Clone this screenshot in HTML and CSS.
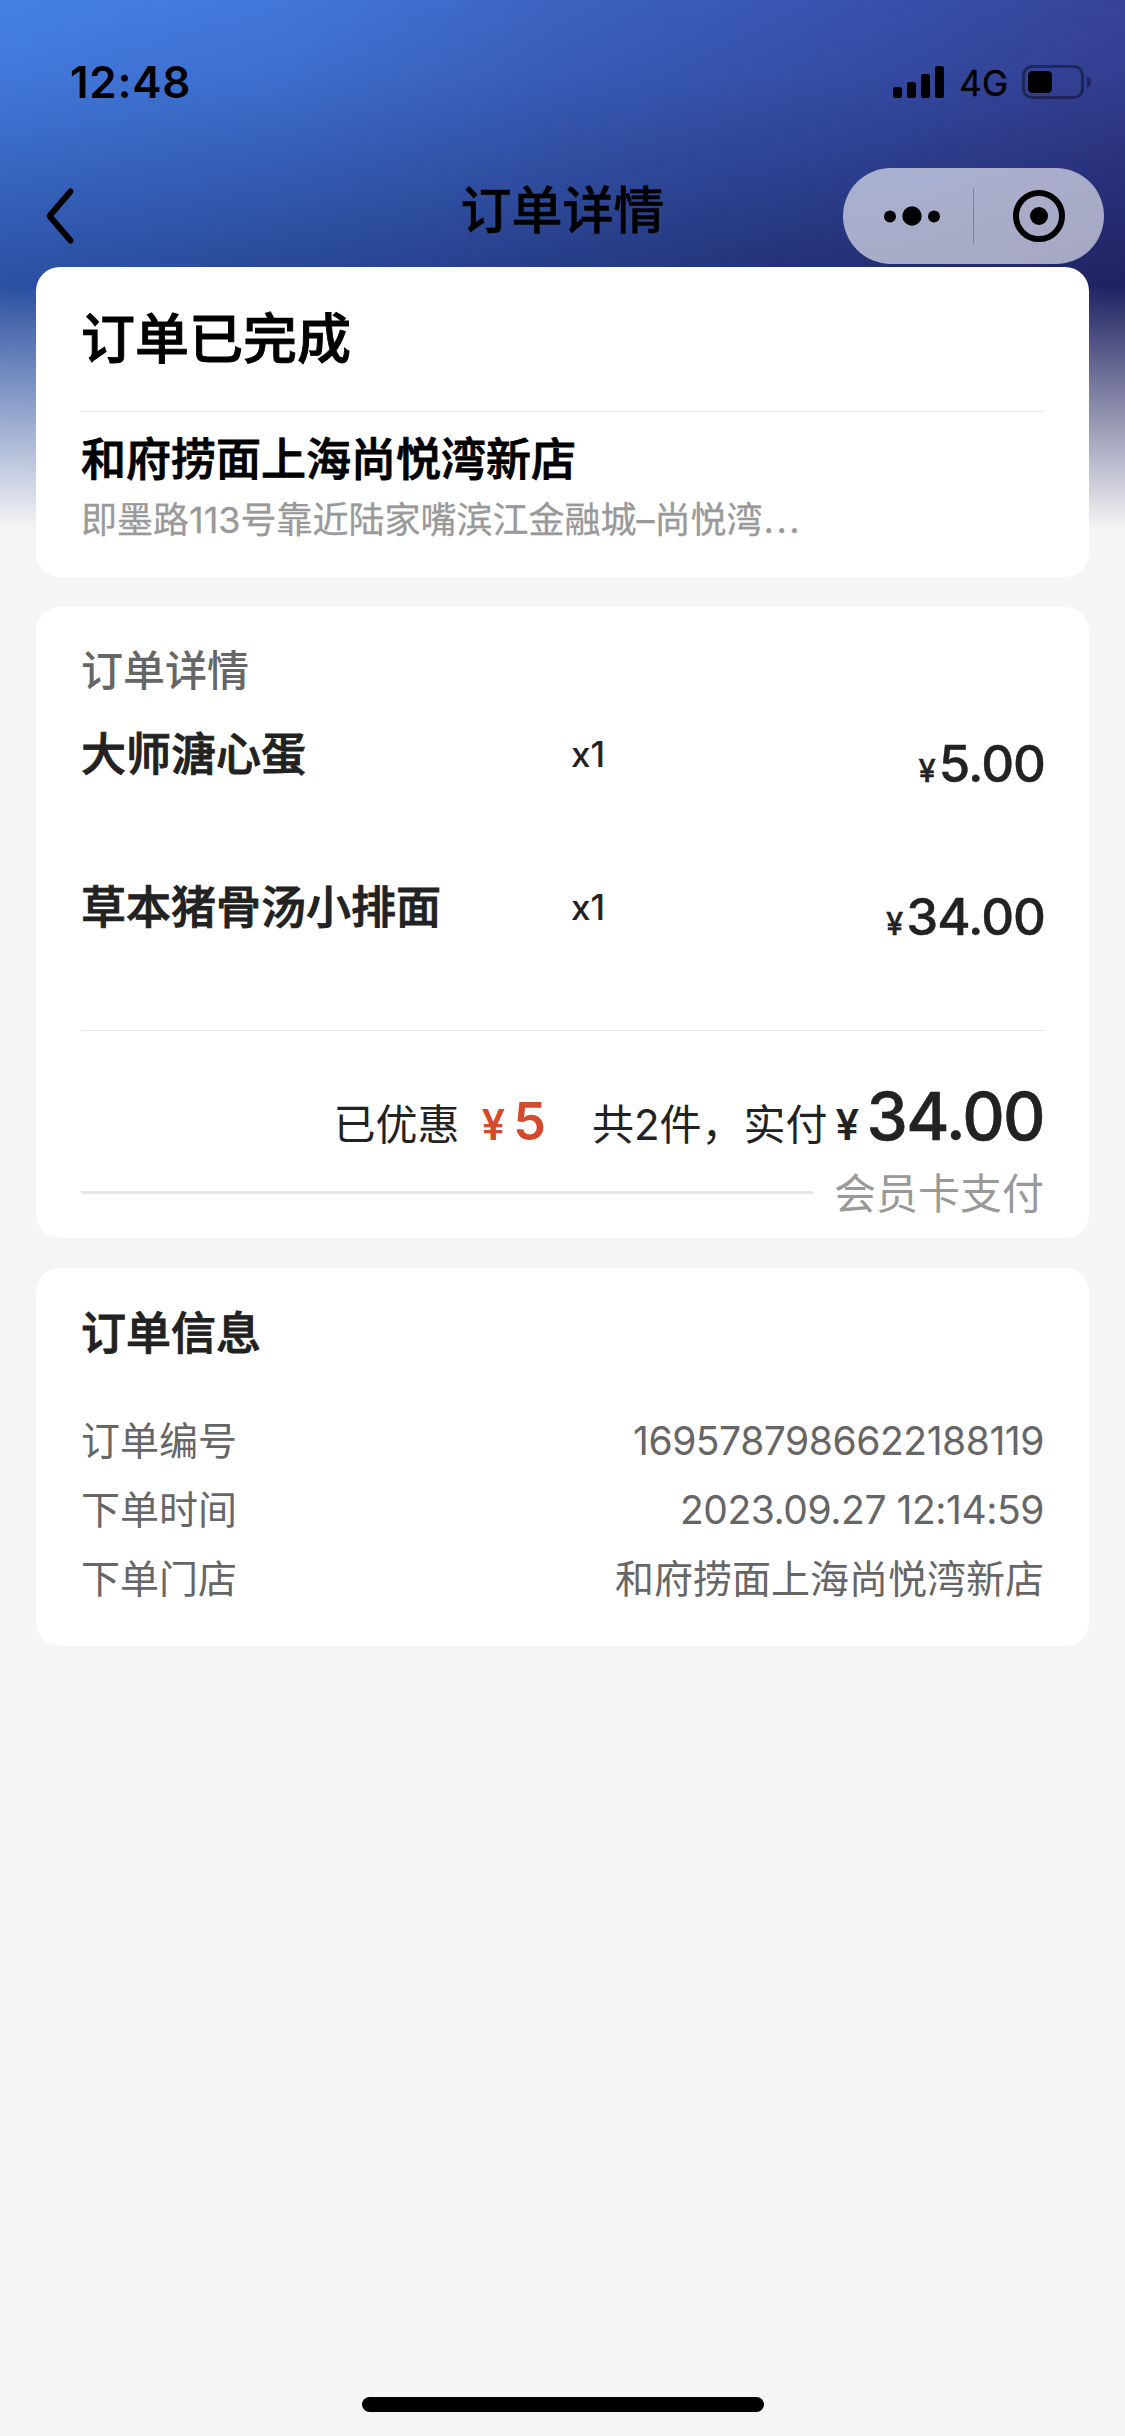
FILE: index.html
```html
<!DOCTYPE html>
<html lang="zh-CN">
<head>
<meta charset="utf-8">
<title>订单详情</title>
<link rel="stylesheet" href="styles.css">
</head>
<body>
<div class="page">
  <header class="header">
    <div class="status-bar">
      <span class="time">12:48</span>
      <div class="status-icons">
        <svg class="signal" width="51" height="32" viewBox="0 0 51 32">
          <rect x="0" y="21" width="9" height="11" rx="2.5"/>
          <rect x="14" y="16" width="9" height="16" rx="2.5"/>
          <rect x="28" y="8" width="9" height="24" rx="2.5"/>
          <rect x="42" y="0" width="9" height="32" rx="2.5"/>
        </svg>
        <span class="network">4G</span>
        <svg class="battery" width="70" height="34" viewBox="0 0 70 34">
          <rect x="1.5" y="1.5" width="59" height="31" rx="8.5" fill="none" stroke="#000" stroke-opacity=".4" stroke-width="3"/>
          <path d="M65 11.5c2.600.8 4 3 4 5.500s-1.400 4.700-4 5.500z" fill-opacity=".4"/>
          <rect x="6" y="6" width="24" height="22" rx="4.500"/>
        </svg>
      </div>
    </div>
    <nav class="nav-bar">
      <svg class="back" width="34" height="60" viewBox="0 0 34 60">
        <path d="M28.500 5.500 7.500 30l21 24.500" fill="none" stroke="#000" stroke-width="6" stroke-linecap="round" stroke-linejoin="round"/>
      </svg>
      <h1 class="nav-title">订单详情</h1>
      <div class="capsule">
        <svg class="more" width="58" height="20" viewBox="0 0 58 20">
          <circle cx="7" cy="10.500" r="6"/><circle cx="29" cy="10" r="9.700"/><circle cx="51" cy="10.500" r="6"/>
        </svg>
        <span class="capsule-line"></span>
        <svg class="close" width="52" height="52" viewBox="0 0 52 52">
          <circle cx="26" cy="26" r="23" fill="none" stroke="#000" stroke-width="6"/><circle cx="26" cy="26" r="9"/>
        </svg>
      </div>
    </nav>
  </header>

  <main class="cards">
    <section class="card status-card">
      <h2 class="order-status">订单已完成</h2>
      <div class="store">
        <p class="store-name">和府捞面上海尚悦湾新店</p>
        <p class="store-address">即墨路113号靠近陆家嘴滨江金融城–尚悦湾<span class="dots">...</span></p>
      </div>
    </section>

    <section class="card detail-card">
      <h3 class="detail-title">订单详情</h3>
      <div class="item">
        <span class="item-name">大师溏心蛋</span>
        <span class="item-count">x1</span>
        <span class="item-price"><small>¥</small>5.00</span>
      </div>
      <div class="item">
        <span class="item-name">草本猪骨汤小排面</span>
        <span class="item-count">x1</span>
        <span class="item-price"><small>¥</small>34.00</span>
      </div>
      <div class="summary">
        <span class="saved-label">已优惠</span>
        <span class="saved"><small>¥</small>5</span>
        <span class="count">共2件，实付</span>
        <span class="total"><small>¥</small>34.00</span>
      </div>
      <div class="payment">
        <span class="payment-line"></span>
        <span class="payment-name">会员卡支付</span>
      </div>
    </section>

    <section class="card info-card">
      <h3 class="info-title">订单信息</h3>
      <div class="info-row"><span>订单编号</span><span class="digits">1695787986622188119</span></div>
      <div class="info-row"><span>下单时间</span><span class="digits">2023.09.27 12:14:59</span></div>
      <div class="info-row"><span>下单门店</span><span>和府捞面上海尚悦湾新店</span></div>
    </section>
  </main>

  <div class="home-indicator"></div>
</div>
</body>
</html>
```
FILE: styles.css
```css
* { box-sizing: border-box; margin: 0; padding: 0; }

body {
  background: #f5f5f5;
  color: #222;
  font-family: Inter, "Noto Sans CJK SC", sans-serif;
}

.page {
  position: relative;
  z-index: 0;
  display: flex;
  flex-direction: column;
  height: 2436px;
  overflow: hidden;
}

/* Blue backdrop: two horizontal ramps blended from top to bottom, then faded out */
.page::before,
.page::after {
  content: "";
  position: absolute;
  z-index: -2;
  top: 0;
  left: 0;
  right: 0;
  height: 532px;
}
.page::before {
  background:
    linear-gradient(180deg, rgba(245,245,245,0) 286px, #f5f5f5 530px),
    linear-gradient(90deg, #2b50a2, #253a82 50%, #1f2260);
}
.page::after {
  z-index: -1;
  height: 288px;
  background: linear-gradient(90deg, #4680e6, #4277da 25%, #3c62c0 50%, #3853ae 75%, #37439a);
  -webkit-mask-image: linear-gradient(180deg, #000, rgba(0,0,0,.84) 25%, transparent);
  mask-image: linear-gradient(180deg, #000, rgba(0,0,0,.84) 25%, transparent);
}

.header { height: 267px; color: #000; }

.status-bar {
  display: flex;
  justify-content: space-between;
  align-items: center;
  height: 164px;
  padding: 0 33px 0 70px;
}
.time { font-size: 44px; font-weight: 600; line-height: 60px; letter-spacing: .7px; }
.status-icons { display: flex; align-items: center; }
.network { margin: 0 14px 0 15px; padding-top: 2px; font-size: 35px; line-height: 48px; -webkit-text-stroke: .4px; }

.nav-bar {
  display: grid;
  grid-template-columns: 261px 1fr 261px;
  align-items: center;
  height: 104px;
  padding: 0 21px;
}
.back { margin-left: 21px; }
.nav-title { font-size: 51px; font-weight: 500; line-height: 70px; text-align: center; padding-bottom: 10px; -webkit-text-stroke: .5px; }
.capsule {
  display: flex;
  align-items: center;
  width: 261px;
  height: 96px;
  border-radius: 48px;
  background: rgba(255,255,255,.6);
}
.more { margin-left: 40px; }
.capsule-line { width: 1px; height: 56px; margin-left: 32px; background: rgba(0,0,0,.25); }
.close { margin-left: 39px; }

.cards { display: flex; flex-direction: column; gap: 30px; padding: 0 36px; }
.card { padding: 0 45px; border-radius: 24px; background: #fff; }

/* Headings sit between the medium and bold weights of the CJK face */
.order-status,
.store-name,
.item-name,
.info-title { font-weight: 500; -webkit-text-stroke: .9px; }

.status-card { height: 310px; color: #000; }
.order-status { height: 145px; padding-top: 2px; border-bottom: 1px solid #e6e6e6; font-size: 54px; line-height: 142px; }
.store-name { padding-top: 18px; font-size: 45px; line-height: 60px; }
.store-address { font-size: 36px; line-height: 60px; color: #999; -webkit-text-stroke: .3px; }
.dots { margin-left: 1px; letter-spacing: 2.5px; }

.detail-card { height: 631px; }
.detail-title { padding-top: 34px; font-size: 42px; font-weight: 500; line-height: 60px; color: #666; }
.item { display: flex; height: 153px; }
.item-name { width: 490px; font-size: 45px; line-height: 107px; }
.item-count { font-size: 35px; font-weight: 500; line-height: 106px; }
.item-price { margin-left: auto; margin-right: -1px; font-size: 51px; font-weight: 500; line-height: 126px; letter-spacing: -1px; -webkit-text-stroke: .4px; }
.item-price small { margin-right: 4px; font-size: 31px; }

.summary {
  display: flex;
  justify-content: flex-end;
  align-items: baseline;
  height: 132px;
  margin-top: 23px;
  border-top: 1px solid #e6e6e6;
  font-size: 42px;
  line-height: 171px;
}
.saved { margin: 0 46px 0 22px; color: #d34b2c; font-size: 52px; font-weight: 600; }
.saved small { margin-right: 8px; font-size: 42px; }
.total { margin-left: 8px; font-size: 66px; font-weight: 500; letter-spacing: -1.7px; -webkit-text-stroke: .5px; }
.total small { margin-right: 9px; font-size: 42px; font-weight: 600; -webkit-text-stroke: 0; }

.payment { display: flex; align-items: center; justify-content: space-between; height: 60px; }
.payment-line { width: 732px; height: 3px; background: #e6e6e6; }
.payment-name { padding-top: 3px; font-size: 42px; line-height: 60px; color: #999; }

.info-card { height: 378px; }
.info-title { height: 138px; font-size: 45px; line-height: 132px; }
.info-row { display: flex; justify-content: space-between; font-size: 39px; line-height: 69px; color: #666; }
.digits { letter-spacing: -.45px; }

.home-indicator { width: 402px; height: 15px; margin: auto auto 24px; border-radius: 8px; background: #000; }
```
